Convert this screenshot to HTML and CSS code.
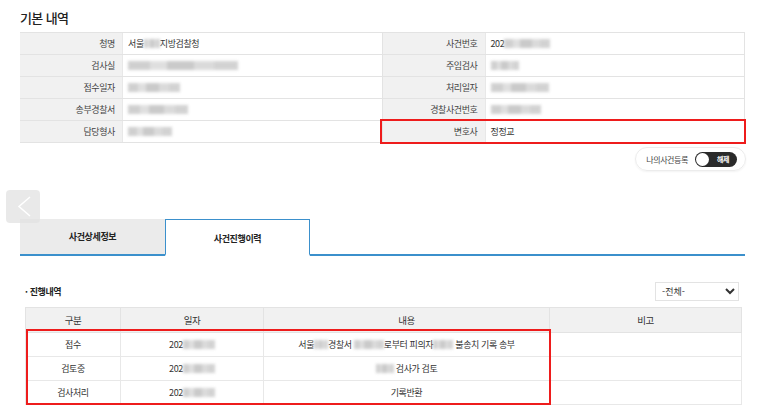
FILE: index.html
```html
<!DOCTYPE html>
<html lang="ko">
<head>
    <meta charset="UTF-8">
    <meta name="viewport" content="width=device-width, initial-scale=1.0">
    <title>사건조회</title>
    <link rel="stylesheet" href="styles.css">
</head>
<body>
    <div class="page">
        <h2 class="title">기본 내역</h2>

        <div class="info">
            <div class="info-row">
                <div class="pair"><div class="label">청명</div><div class="value">서울<span class="blur w16"></span>지방검찰청</div></div>
                <div class="pair"><div class="label">사건번호</div><div class="value">202<span class="blur w46"></span></div></div>
            </div>
            <div class="info-row">
                <div class="pair"><div class="label">검사실</div><div class="value"><span class="blur w110"></span></div></div>
                <div class="pair"><div class="label">주임검사</div><div class="value"><span class="blur w28"></span></div></div>
            </div>
            <div class="info-row">
                <div class="pair"><div class="label">접수일자</div><div class="value"><span class="blur w52"></span></div></div>
                <div class="pair"><div class="label">처리일자</div><div class="value"><span class="blur w58"></span></div></div>
            </div>
            <div class="info-row">
                <div class="pair"><div class="label">송부경찰서</div><div class="value"><span class="blur w60"></span></div></div>
                <div class="pair"><div class="label">경찰사건번호</div><div class="value"><span class="blur w50"></span></div></div>
            </div>
            <div class="info-row">
                <div class="pair"><div class="label">담당형사</div><div class="value"><span class="blur w44"></span></div></div>
                <div class="pair marked"><div class="label">변호사</div><div class="value">정정교</div></div>
            </div>
        </div>

        <div class="my-case">
            <div class="my-case-box">
                <span>나의사건등록</span>
                <span class="switch"><span class="knob"></span><span class="switch-text">해제</span></span>
            </div>
        </div>

        <div class="tabs">
            <div class="tab">사건상세정보</div>
            <div class="tab active">사건진행이력</div>
        </div>

        <div class="section-head">
            <span class="section-title">· 진행내역</span>
            <select class="filter">
                <option>-전체-</option>
            </select>
        </div>

        <div class="history">
            <table class="history-table">
                <colgroup>
                    <col class="c1"><col class="c2"><col class="c3"><col class="c4">
                </colgroup>
                <thead>
                    <tr><th>구분</th><th>일자</th><th>내용</th><th>비고</th></tr>
                </thead>
                <tbody>
                    <tr>
                        <td>접수</td>
                        <td>202<span class="blur w32"></span></td>
                        <td>서울<span class="blur w14"></span>경찰서 <span class="blur w30"></span>로부터 피의자<span class="blur w20"></span> 불송치 기록 송부</td>
                        <td></td>
                    </tr>
                    <tr>
                        <td>검토중</td>
                        <td>202<span class="blur w32"></span></td>
                        <td><span class="blur w18"></span> 검사가 검토</td>
                        <td></td>
                    </tr>
                    <tr>
                        <td>검사처리</td>
                        <td>202<span class="blur w32"></span></td>
                        <td>기록반환</td>
                        <td></td>
                    </tr>
                </tbody>
            </table>
            <div class="mark-box"></div>
        </div>
    </div>

    <button class="prev-btn" aria-label="이전">
        <svg width="34" height="33" viewBox="0 0 34 33">
            <polyline points="24,7 13,16.5 24,26" fill="none" stroke="#fff" stroke-width="1.5"/>
        </svg>
    </button>
</body>
</html>
```

FILE: styles.css
```css
body {
    margin: 0;
    background-color: #fff;
    font-family: "Noto Sans CJK KR", "Noto Sans", sans-serif;
    color: #333;
    font-size: 9px;
    letter-spacing: -0.4px;
}
.page {
    padding: 10px 0 0 20px;
    width: 725px;
}
.title {
    margin: 0 0 6px;
    font-size: 13px;
    line-height: 16px;
    font-weight: 500;
    color: #222;
    letter-spacing: -0.6px;
}

/* basic info */
.info {
    border-top: 1px solid #e3e3e3;
    border-right: 1px solid #e3e3e3;
}
.info-row {
    display: flex;
    border-bottom: 1px solid #e3e3e3;
    height: 21px;
}
.pair {
    display: flex;
    width: 362px;
}
.pair + .pair {
    width: 363px;
}
.pair.marked {
    outline: 2px solid #ee1c1c;
    outline-offset: 0;
    position: relative;
    z-index: 1;
}
.label {
    width: 95px;
    padding-right: 7px;
    background-color: #f1f1f1;
    text-align: right;
    line-height: 21px;
    color: #444;
}
.value {
    flex: 1;
    padding-left: 5px;
    line-height: 21px;
    border-left: 1px solid #e8e8e8;
    white-space: nowrap;
}
.pair + .pair .label {
    border-left: 1px solid #e3e3e3;
}

/* redacted text */
.blur {
    display: inline-block;
    height: 9px;
    vertical-align: -1px;
    background: linear-gradient(90deg, #c4c4c4 0 20%, #d8d8d8 20% 35%, #bdbdbd 35% 60%, #d2d2d2 60% 78%, #c8c8c8 78%);
    filter: blur(1.6px);
    opacity: 0.8;
}
.w14 { width: 14px; }
.w16 { width: 16px; }
.w18 { width: 18px; }
.w20 { width: 20px; }
.w28 { width: 28px; }
.w30 { width: 30px; }
.w32 { width: 32px; }
.w44 { width: 44px; }
.w46 { width: 46px; }
.w50 { width: 50px; }
.w52 { width: 52px; }
.w58 { width: 58px; }
.w60 { width: 60px; }
.w110 { width: 110px; }

/* my case toggle */
.my-case {
    display: flex;
    justify-content: flex-end;
    margin-top: 4px;
    margin-right: -1px;
}
.my-case-box {
    display: flex;
    align-items: center;
    gap: 7px;
    height: 22px;
    padding: 0 8px 0 10px;
    border: 1px solid #ececec;
    border-radius: 12px;
    box-shadow: 0 1px 2px rgba(0, 0, 0, 0.05);
    font-size: 8px;
    color: #444;
}
.switch {
    display: flex;
    align-items: center;
    width: 42px;
    height: 15px;
    border-radius: 8px;
    background-color: #2a2a2a;
}
.knob {
    width: 13px;
    height: 13px;
    margin-left: 1px;
    border-radius: 50%;
    background-color: #fff;
}
.switch-text {
    flex: 1;
    text-align: center;
    color: #fff;
    font-size: 7px;
    font-weight: bold;
}

/* tabs */
.tabs {
    display: flex;
    margin-top: 48px;
    border-bottom: 2px solid #3b90cc;
}
.tab {
    width: 145px;
    height: 35px;
    line-height: 35px;
    text-align: center;
    background-color: #ebebeb;
    font-weight: bold;
    color: #222;
}
.tab.active {
    box-sizing: border-box;
    height: 37px;
    margin-bottom: -2px;
    line-height: 37px;
    background-color: #fff;
    border: 1px solid #3b90cc;
    border-bottom: 2px solid #fff;
}

/* history */
.section-head {
    display: flex;
    justify-content: space-between;
    align-items: center;
    margin: 26px 0 0 5px;
    width: 714px;
}
.section-title {
    font-weight: bold;
    color: #222;
}
.filter {
    width: 84px;
    height: 19px;
    padding: 0 2px;
    border: 1px solid #e3e3e3;
    background-color: #fff;
    font-family: "Noto Sans CJK KR", sans-serif;
    font-size: 9px;
    color: #333;
}
.history {
    position: relative;
    margin: 6px 0 0 5px;
    width: 716px;
}
.history-table {
    width: 716px;
    border-collapse: collapse;
    table-layout: fixed;
}
.c1 { width: 95px; }
.c2 { width: 143px; }
.c3 { width: 286px; }
.c4 { width: 192px; }
.history-table th {
    height: 22px;
    background-color: #f1f1f1;
    border: 1px solid #e3e3e3;
    font-weight: normal;
    font-size: 9.5px;
    color: #333;
}
.history-table td {
    height: 23px;
    padding: 0;
    border: 1px solid #e8e8e8;
    text-align: center;
    white-space: nowrap;
}
.mark-box {
    position: absolute;
    left: 1px;
    top: 22px;
    width: 521px;
    height: 72px;
    border: 2px solid #ee1c1c;
}

.prev-btn {
    position: absolute;
    left: 6px;
    top: 190px;
    width: 34px;
    height: 33px;
    padding: 0;
    border: none;
    border-radius: 4px;
    background-color: rgba(225, 225, 225, 0.75);
    cursor: pointer;
}
.prev-btn svg {
    display: block;
}
```
